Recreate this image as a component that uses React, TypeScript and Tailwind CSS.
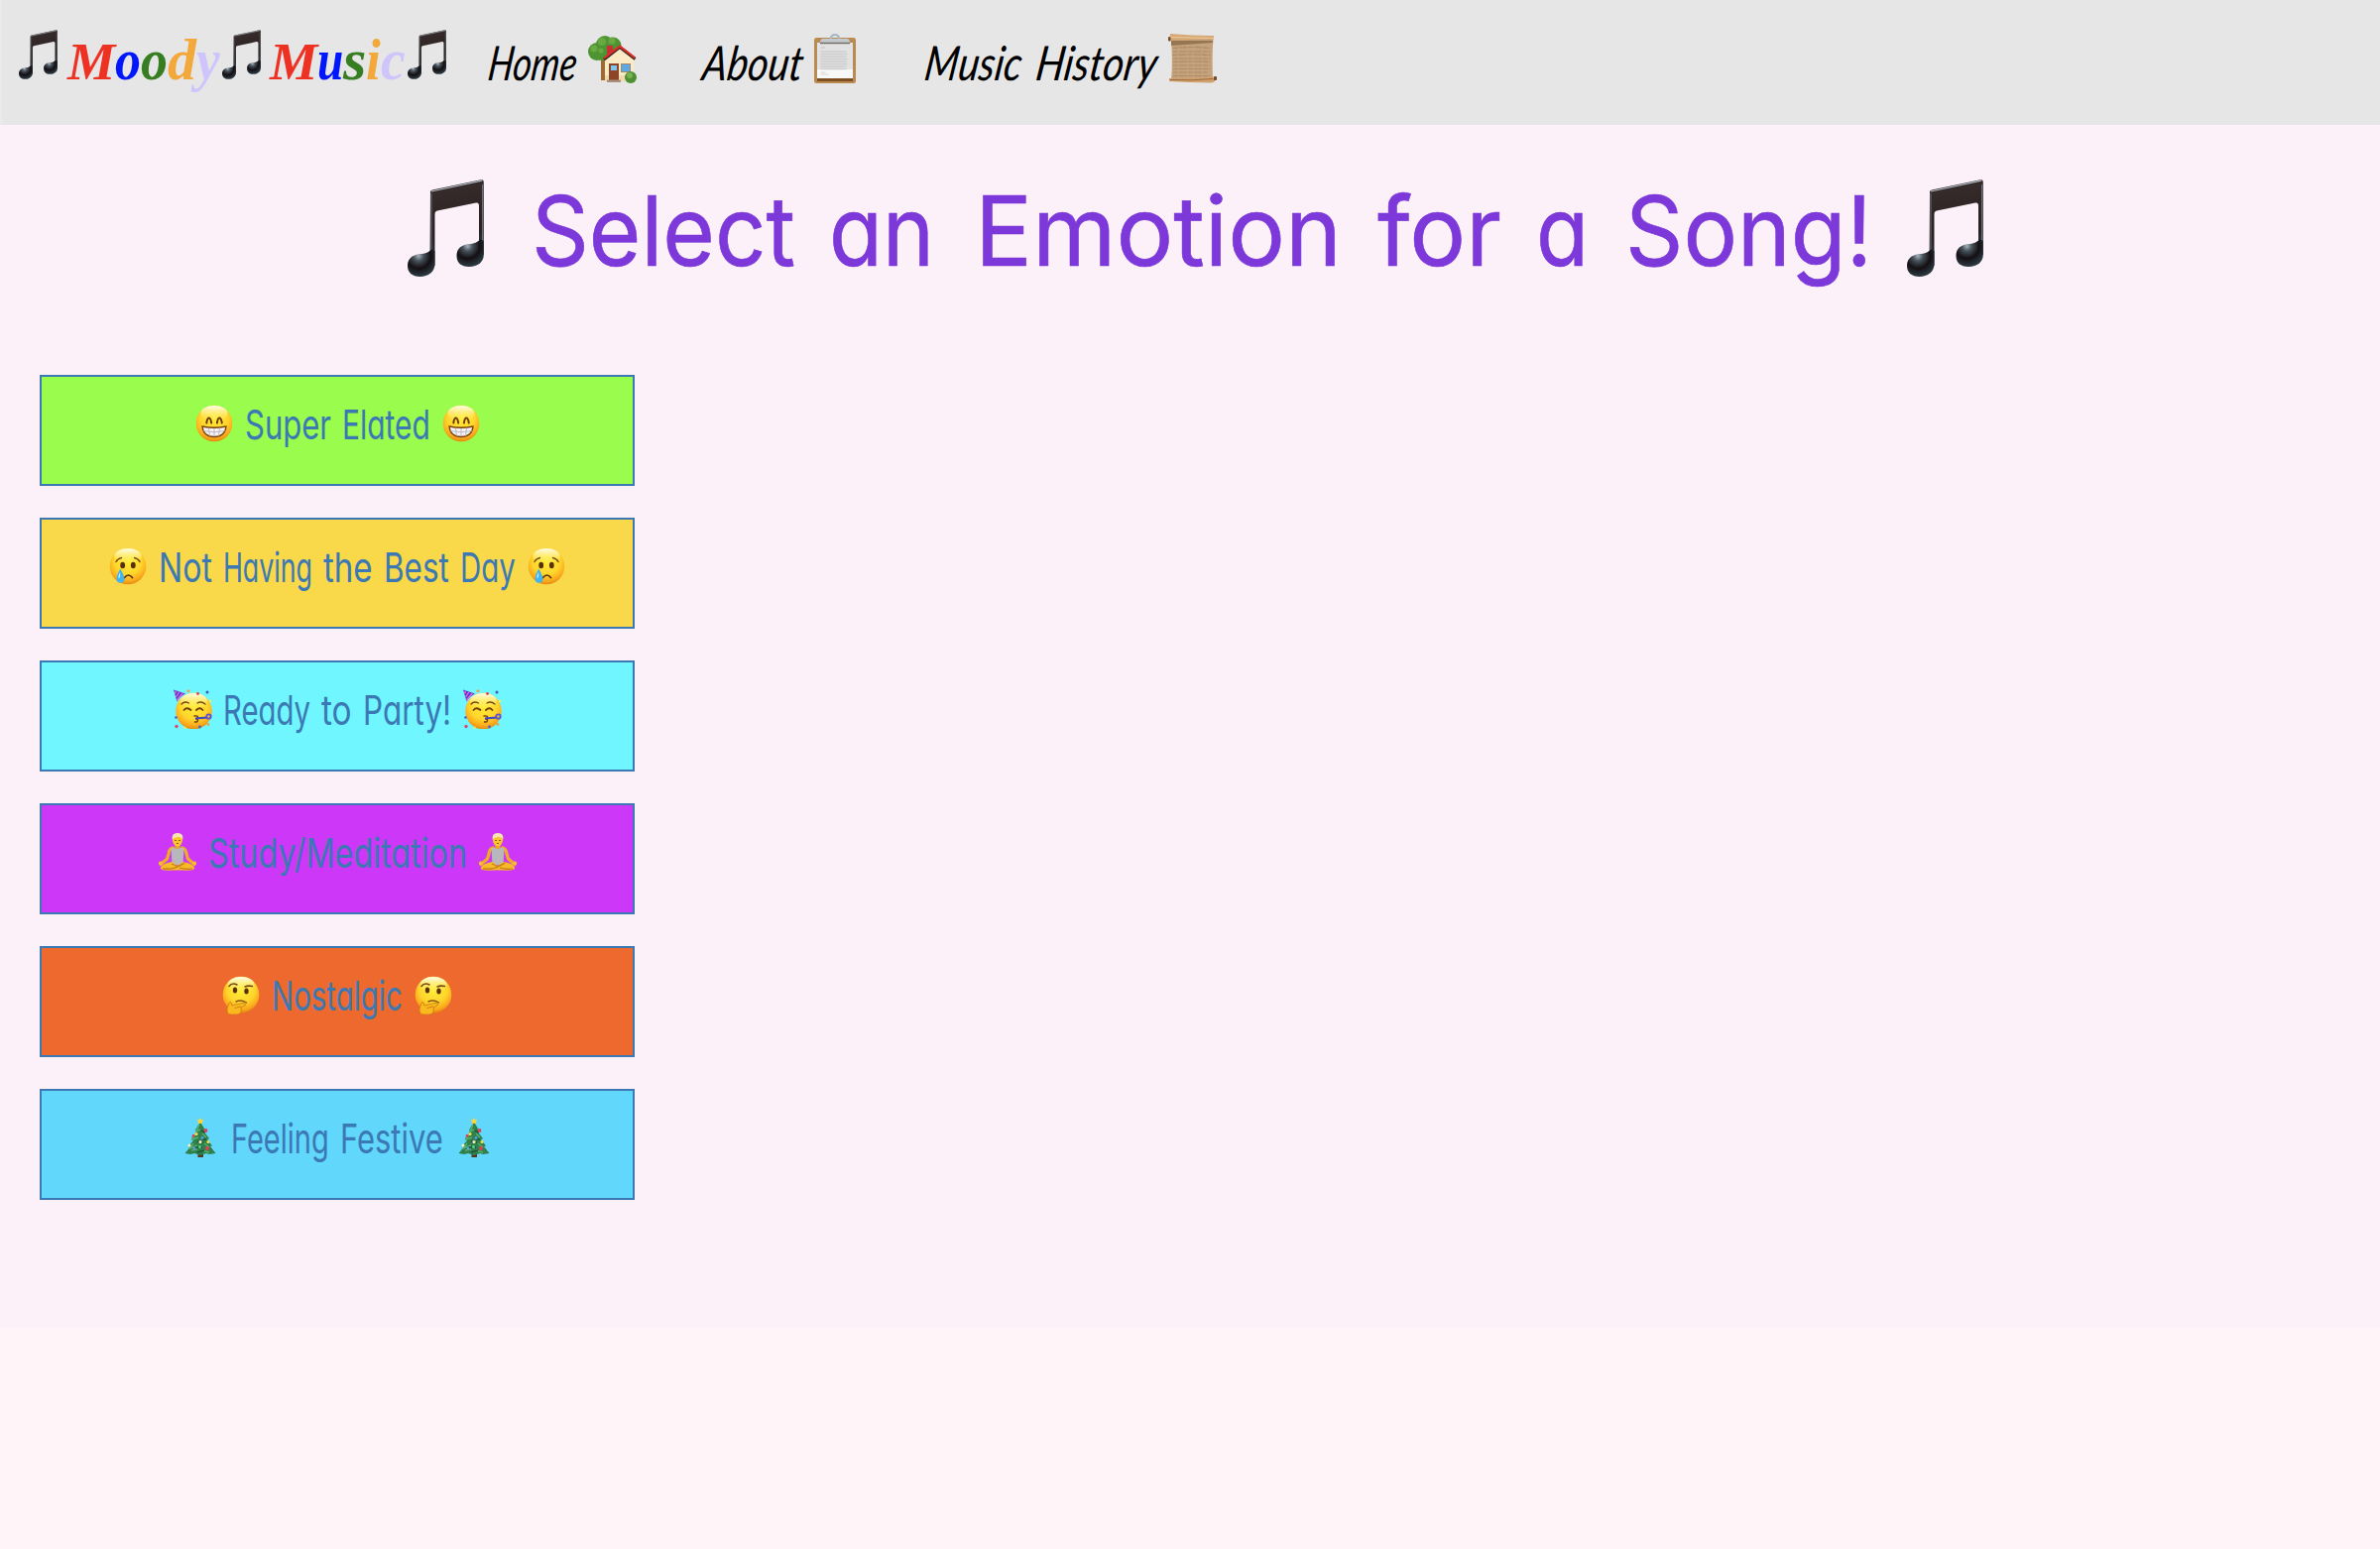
import { useLayoutEffect, useRef, useState } from "react";
import type { ReactNode } from "react";

/** Text stretched horizontally so that it fills a given width. */
function Fit({ text, width, skew = 0, className = "" }: { text: string; width: number; skew?: number; className?: string }) {
  const ref = useRef<HTMLSpanElement>(null);
  const [scale, setScale] = useState(1);
  useLayoutEffect(() => {
    const natural = ref.current?.offsetWidth ?? width;
    setScale(width / natural);
  }, [text, width]);
  return (
    <span className={`inline-block whitespace-nowrap ${className}`} style={{ width }}>
      <span ref={ref} className="inline-block origin-bottom-left" style={{ transform: `scaleX(${scale}) skewX(${-skew}deg)` }}>
        {text}
      </span>
    </span>
  );
}

function Note({ className }: { className: string }) {
  return (
    <svg viewBox="0 0 77 98" className={`shrink-0 ${className}`}>
      <defs>
        <linearGradient id="beam" x1="0" y1="0" x2="0.15" y2="1">
          <stop offset="0" stopColor="#3a2e2e" />
          <stop offset="0.7" stopColor="#2a2020" />
          <stop offset="1" stopColor="#2b4152" />
        </linearGradient>
        <radialGradient id="head" cx="0.4" cy="0.25" r="0.75">
          <stop offset="0" stopColor="#a9b4bb" />
          <stop offset="0.25" stopColor="#46525b" />
          <stop offset="0.6" stopColor="#140f12" />
          <stop offset="1" stopColor="#2d3c45" />
        </radialGradient>
      </defs>
      <path d="M23 12.500Q23 11 25 10.500L74 0.300Q76.800 0 76.800 2.500V76H72V26.500Q72 23 69 23.500L30 31.500Q27.500 32 27.500 35V87H22.500Z" fill="url(#beam)" />
      <path d="M24 12L75 1.200" stroke="#aebcc5" strokeWidth="1.200" fill="none" />
      <path d="M24 14V74M75.500 5V66" stroke="#65747d" strokeWidth="1" fill="none" />
      <path d="M0 87C0 78 7 75.500 14 75C20 74.500 23 72 24.500 70L27.500 72V85C27.500 93 21 98 12.500 98C5 98 0 94 0 87Z" fill="url(#head)" />
      <path d="M49.500 77C49.500 68 56 65.500 63 65C69 64.500 72 62 73.500 60L76.800 62V76C76.800 83 71 88 62 88C54 88 49.500 84 49.500 77Z" fill="url(#head)" />
    </svg>
  );
}

function House({ className }: { className: string }) {
  return (
    <svg viewBox="0 0 49 48" className={className}>
      <path d="M13 22h6l-1 23h-5z" fill="#9b6a35" />
      <g fill="#4f9433">
        <circle cx="9" cy="16" r="9" />
        <circle cx="17" cy="9" r="9" />
        <circle cx="25" cy="10" r="8.500" />
        <circle cx="14" cy="17" r="8" />
      </g>
      <g fill="#75b34a" opacity="0.7">
        <circle cx="14" cy="6" r="4" />
        <circle cx="6" cy="13" r="3.500" />
        <circle cx="24" cy="5" r="3.500" />
        <circle cx="13" cy="15" r="2.500" />
      </g>
      <path d="M19 10h6v10h-6z" fill="#c53232" />
      <path d="M17 24L32 11.500L46 24V46H17Z" fill="#fbeac6" />
      <path d="M17 40h29v6H17z" fill="#f0d9ac" />
      <path d="M16 24L32 11.500L47.500 23.500" fill="none" stroke="#3f2724" strokeWidth="3" />
      <path d="M16 22.800L32 10.600L47.500 22.500" fill="none" stroke="#e02f2b" strokeWidth="2" />
      <path d="M21 28h10v17H21z" fill="#8c4526" />
      <path d="M23 30h6v5h-6z" fill="#7fc5f3" />
      <path d="M33 28h10v9H33z" fill="#a78664" />
      <path d="M34 29h8v7h-8z" fill="#5aa9e8" />
      <path d="M19 44.500h14v2.500H19z" fill="#a98f7d" />
      <circle cx="43" cy="42" r="6" fill="#4f8f33" />
      <circle cx="42" cy="40" r="3" fill="#78b44d" />
    </svg>
  );
}

function Clipboard({ className }: { className: string }) {
  return (
    <svg viewBox="0 0 42 50" className={className}>
      <rect x="0" y="4" width="42" height="46" rx="2.500" fill="#b98b50" />
      <path d="M3 45h36v3H3z" fill="#7d4e20" />
      <path d="M3 9h36v36H3z" fill="#e2e2e2" />
      <path d="M3 36h36v9H3z" fill="#f8f8f8" />
      <path d="M6.500 14h5" stroke="#c4c4c4" />
      <path d="M6.500 18h26M6.500 20.500h27M6.500 23h26M6.500 25.500h27M6.500 28h26M6.500 30.500h27M6.500 33h26M6.500 35.500h26" stroke="#cecece" strokeWidth="1.400" />
      <path d="M6.500 39h5M6.500 41h8" stroke="#d5d5d5" />
      <path d="M16.500 6Q17 1 21 1T25.500 6" fill="none" stroke="#a6b6c3" strokeWidth="2" />
      <path d="M8 5h26q2 1 2 4H6q0-3 2-4z" fill="#c3c8cc" />
      <path d="M6 9.500h30" stroke="#746f66" strokeWidth="1.500" />
    </svg>
  );
}

function Scroll({ className }: { className: string }) {
  return (
    <svg viewBox="0 0 49 50" className={className}>
      <path d="M2.500 4L45.500 5Q44 22 45 46L3 47Q5 25 2.500 4Z" fill="#c4a27c" />
      <path d="M3 7h42v2L3 12z" fill="#8b6a48" opacity="0.8" />
      <path d="M5 14.500q18-2 37 0M5 18h38M4.500 21.500q18-1 38 0M5 25h38M5 28.500q18-1 37 0M5 32h37M5 35.500h37M5 39h36M5 42.500h37" stroke="#a3805c" strokeWidth="1.200" strokeDasharray="5 1 8 1" fill="none" opacity="0.7" />
      <path d="M2 0Q24 2 46 2V5.500Q20 6 2 7Z" fill="#d6a877" />
      <path d="M0.500 3.500L46 4.500" stroke="#f0c999" strokeWidth="1" />
      <rect x="0" y="3" width="2.500" height="4.500" rx="1" fill="#7b4e2b" />
      <path d="M1 45Q24 46 47 43.500V48Q45 49.500 43 49.500Q20 49 1 48Z" fill="#d2a06c" />
      <path d="M2 46.500Q24 47.500 45 45.500" stroke="#9c683a" strokeWidth="1" fill="none" />
      <rect x="46" y="43" width="3" height="4" rx="1" fill="#74492a" />
    </svg>
  );
}

function FaceBase() {
  return (
    <>
      <defs>
        <radialGradient id="face" cx="0.5" cy="0.35" r="0.68">
          <stop offset="0" stopColor="#ffec38" />
          <stop offset="0.55" stopColor="#ffd62c" />
          <stop offset="0.82" stopColor="#fba91c" />
          <stop offset="1" stopColor="#da7f0b" />
        </radialGradient>
        <linearGradient id="shine" x1="0" y1="0" x2="0" y2="1">
          <stop offset="0" stopColor="#fffef0" />
          <stop offset="1" stopColor="#fff36a" stopOpacity="0" />
        </linearGradient>
      </defs>
      <circle cx="20" cy="20" r="18.300" fill="url(#face)" />
      <ellipse cx="20" cy="10" rx="13.500" ry="8" fill="url(#shine)" />
    </>
  );
}

function Grin() {
  return (
    <svg viewBox="0 0 40 40" className="size-10">
      <FaceBase />
      <path d="M12.300 19.500Q13 14.500 14.700 14.500T17.200 19.500M22.900 19.500Q23.600 14.500 25.300 14.500T27.800 19.500" fill="none" stroke="#713d08" strokeWidth="2" strokeLinecap="round" />
      <path d="M8 23Q20 25.500 32 23Q31 33.500 20 33.500T8 23Z" fill="#f4f2f5" stroke="#7a420e" strokeWidth="1.300" />
      <path d="M9 27.500Q20 30 31 27.500M14.500 24.500l1 8M20 25v8M25.500 24.500l-1 8" fill="none" stroke="#b1adb8" strokeWidth="0.800" />
    </svg>
  );
}

function Cry() {
  return (
    <svg viewBox="0 0 40 40" className="size-10">
      <FaceBase />
      <path d="M8 15.500Q9.500 12.500 13.500 11.500M26.500 11.500Q30.500 12.500 32 15.500" fill="none" stroke="#7a480d" strokeWidth="1.400" strokeLinecap="round" />
      <ellipse cx="14.700" cy="19" rx="2.400" ry="3.300" fill="#593107" />
      <ellipse cx="25.300" cy="19" rx="2.400" ry="3.300" fill="#593107" />
      <path d="M16.500 31.500Q20.500 26.500 24.500 31.500" fill="none" stroke="#593107" strokeWidth="1.700" strokeLinecap="round" />
      <path d="M12.300 22.500Q8.500 29 8.500 32.500Q8.500 36.800 12.500 36.800T16.500 32.500Q16 29 12.300 22.500Z" fill="#40b5ee" />
      <path d="M12 26Q10 30 10.500 32.500Q13 31 12 26Z" fill="#c4efff" />
    </svg>
  );
}

function Party() {
  return (
    <svg viewBox="0 0 40 40" className="size-10">
      <g transform="translate(1.500 2)">
        <FaceBase />
      </g>
      <path d="M1 0.500L13 4.500Q7.500 7 4.500 12.500Z" fill="#5a3bd0" />
      <path d="M3.500 1.500L2.500 4.500M7 2.500L3.500 8M10.500 3.600L4.500 11" stroke="#e668d8" strokeWidth="1.300" />
      <path d="M9 15q3-3.500 7.500-1M25 14q4-2.500 8 1" fill="none" stroke="#7a480d" strokeWidth="1.400" strokeLinecap="round" />
      <path d="M11.500 21q3-3.500 7 0M24 21q3.500-3.500 6.500 0" fill="none" stroke="#713d08" strokeWidth="1.800" strokeLinecap="round" />
      <path d="M22 27q4-.5 3.500 1.300T23.500 30q2.500 0 2 1.700T22.500 33" fill="none" stroke="#713d08" strokeWidth="1.400" strokeLinecap="round" />
      <path d="M23 29.500L35 28.500" stroke="#3d45c9" strokeWidth="2.200" />
      <circle cx="36.500" cy="27.500" r="2.200" fill="none" stroke="#5a55d6" strokeWidth="1.800" />
      <circle cx="16" cy="1.800" r="1.500" fill="#f6a04a" />
      <circle cx="25.500" cy="4.500" r="1.400" fill="#e7404e" />
      <circle cx="35" cy="3" r="1.500" fill="#425bc9" />
      <circle cx="38" cy="12" r="1.300" fill="#f4ec5c" />
      <circle cx="3.500" cy="28.500" r="1.300" fill="#3765cf" />
      <circle cx="4" cy="37.500" r="1.700" fill="#e4456b" />
      <circle cx="12.500" cy="38.800" r="1.200" fill="#f8e34e" />
      <circle cx="27.500" cy="38" r="1.400" fill="#4962c9" />
      <circle cx="36" cy="35.500" r="1.400" fill="#eda340" />
    </svg>
  );
}

function Lotus() {
  return (
    <svg viewBox="0 0 40 40" className="size-10">
      <path d="M15 16Q11.500 17 11 22L9.500 27L3 32.500M25 16Q28.500 17 29 22L30.500 27L37 32.500" fill="none" stroke="#eead25" strokeWidth="3.200" strokeLinecap="round" strokeLinejoin="round" />
      <circle cx="2.800" cy="31.500" r="1.900" fill="#f6bf35" />
      <circle cx="37.200" cy="31.500" r="1.900" fill="#f6bf35" />
      <path d="M17.500 12h5v6h-5z" fill="#eda71e" />
      <path d="M13.500 16.500L17 15.500Q20 19 23 15.500L26.500 16.500Q26 24 25.500 33H14.500Q14 24 13.500 16.500Z" fill="#b8b8bc" />
      <path d="M14.500 30Q3 32 2.800 36.500Q4 39.500 15 38.500L25 38.500Q36 39.500 37.200 36.500Q37 32 25.500 30L20 34Z" fill="#f7b928" />
      <path d="M5 37Q15 38 21 34.500T27 32M35 37Q28 38 22 36M14 32Q17 33 19 34.500" fill="none" stroke="#bd7b12" strokeWidth="1.200" />
      <ellipse cx="20" cy="8" rx="5" ry="6.300" fill="#fbc52f" />
      <path d="M14.800 8Q13.500 1 20 1T25.200 8Q24 4.500 20 5T14.800 8Z" fill="#f7e5b2" />
      <path d="M17 8.500h2M21 8.500h2M19 11.500h2" stroke="#8b4b12" strokeWidth="0.900" />
    </svg>
  );
}

function Thinking() {
  return (
    <svg viewBox="0 0 40 40" className="size-10">
      <FaceBase />
      <path d="M8 11.500Q11 7.500 16 10M24 12Q27 10.500 31.500 11.500" fill="none" stroke="#7a480d" strokeWidth="1.600" strokeLinecap="round" />
      <ellipse cx="14" cy="15.500" rx="2.200" ry="3" fill="#593107" />
      <ellipse cx="25.500" cy="16.500" rx="2.200" ry="3" fill="#593107" />
      <path d="M15 27Q20 24.500 25.500 28" fill="none" stroke="#8b5210" strokeWidth="1.400" strokeLinecap="round" />
      <path d="M8.300 28Q10 26 11 31L21 28.500Q26 28.500 24 31L20 33Q21.500 40 15.500 40H10Q5.500 40 6 34Z" fill="#fbb81f" stroke="#c67e0d" strokeWidth="0.800" />
      <path d="M13.500 33.500L20 32" stroke="#c67e0d" strokeWidth="0.900" />
    </svg>
  );
}

function Tree() {
  return (
    <svg viewBox="0 0 40 40" className="size-10">
      <path d="M17.500 34h5.500v6h-5.500z" fill="#5f341e" />
      <path d="M20 4L25 13L23.500 14L29 21L27 22L32 28.500L30 29L35.500 36L29 37L26 36L20 38L14 36L10 37L4.500 36L10 29.500L8 29L13 23L11 21L16.500 14L15 12.500Z" fill="#2f804c" />
      <path d="M19 7L16 14L20 12M15 17L12 22L18 20M13 26L9 31L17 28M22 16l4 4M24 26l5 4M11 33l6-1M22 33l7 2" fill="none" stroke="#57ae68" strokeWidth="1.500" />
      <path d="M21 13l4 2M17 24l6 1M14 30l8 0M26 22l-4 0M17 35l7-2" stroke="#195537" strokeWidth="1.400" />
      <path d="M20 0L21.100 2.300L23.600 2.600L21.800 4.300L22.300 6.800L20 5.500L17.700 6.800L18.200 4.300L16.400 2.600L18.900 2.300Z" fill="#ffd638" />
      <circle cx="25.500" cy="13" r="1.900" fill="#df3f59" />
      <circle cx="13" cy="18.500" r="1.400" fill="#df3f59" />
      <circle cx="27" cy="31" r="2" fill="#df3f59" />
      <circle cx="16" cy="16.500" r="1.600" fill="#f6dd4c" />
      <circle cx="28" cy="24.500" r="1.600" fill="#f6dd4c" />
      <circle cx="22" cy="20.500" r="1.400" fill="#5799eb" />
      <circle cx="14" cy="31" r="1.400" fill="#5799eb" />
      <circle cx="20" cy="24.500" r="1.600" fill="#f4efbb" />
      <circle cx="9" cy="28" r="1.500" fill="#f4efbb" />
      <circle cx="19.500" cy="29.500" r="1.500" fill="#54d489" />
    </svg>
  );
}

type Letter = [string, number, string];

const moody: Letter[] = [
  ["M", 48, "text-[52px] text-[#ed3223]"],
  ["o", 26, "text-[60px] text-[#0017fb]"],
  ["o", 27, "text-[60px] text-[#377e22]"],
  ["d", 29, "text-[60px] text-[#f2a83b]"],
  ["y", 24, "text-[60px] text-[#cfc4fb]"],
];

const music: Letter[] = [
  ["M", 48, "text-[52px] text-[#ed3223]"],
  ["u", 26, "text-[60px] text-[#0017fb]"],
  ["s", 23, "text-[60px] text-[#377e22]"],
  ["i", 15, "text-[60px] text-[#f2a83b]"],
  ["c", 25, "text-[60px] text-[#cfc4fb]"],
];

function LogoWord({ letters }: { letters: Letter[] }) {
  return (
    <span className="mb-[6px] flex items-baseline font-['Liberation_Serif',serif] leading-none font-bold italic">
      {letters.map(([char, width, style], i) => (
        <Fit key={i} text={char} width={width} className={style} />
      ))}
    </span>
  );
}

function NavLink({ words, children }: { words: [string, number][]; children: ReactNode }) {
  return (
    <a className="flex h-full items-center gap-[14px] text-[48px] leading-none text-black italic">
      <span className="flex gap-[14px]">
        {words.map(([text, width]) => (
          <Fit key={text} text={text} width={width} skew={10} />
        ))}
      </span>
      {children}
    </a>
  );
}

const moods: { words: [string, number][]; icon: () => ReactNode; color: string }[] = [
  { words: [["Super", 87], ["Elated", 89]], icon: Grin, color: "bg-[#9afc4d]" },
  { words: [["Not", 54], ["Having", 90], ["the", 50], ["Best", 66], ["Day", 56]], icon: Cry, color: "bg-[#f9d949]" },
  { words: [["Ready", 88], ["to", 31], ["Party!", 89]], icon: Party, color: "bg-[#70f6fe]" },
  { words: [["Study/Meditation", 261]], icon: Lotus, color: "bg-[#cd37f7]" },
  { words: [["Nostalgic", 132]], icon: Thinking, color: "bg-[#ed692d]" },
  { words: [["Feeling", 99], ["Festive", 104]], icon: Tree, color: "bg-[#62d7fc]" },
];

const title: [string, number][] = [
  ["Select", 266],
  ["an", 106],
  ["Emotion", 370],
  ["for", 125],
  ["a", 53],
  ["Song!", 249],
];

const titleGaps = ["ml-[48px]", "ml-[34px]", "ml-[41px]", "ml-[36px]", "ml-[35px]", "ml-[37px]"];

export default function App() {
  return (
    <div className="h-[1562px] w-[2400px] overflow-hidden bg-[#fff4f8]">
      <div className="h-[1339px] bg-[#fdf1f9]">
        <header className="flex h-[126px] items-center border-l-2 border-[#eaeaea] bg-[#e6e6e6] pl-[17px] font-[Lato,sans-serif]">
          <div className="flex items-center">
            <Note className="mb-[16px] h-[50px] w-[39px]" />
            <span className="ml-[10px]">
              <LogoWord letters={moody} />
            </span>
            <Note className="mb-[16px] ml-[2px] h-[50px] w-[39px]" />
            <span className="ml-[9px]">
              <LogoWord letters={music} />
            </span>
            <Note className="mb-[16px] ml-[2px] h-[50px] w-[39px]" />
          </div>
          <nav className="ml-[40px] flex h-full items-center">
            <NavLink words={[["Home", 89]]}>
              <House className="mb-[6px] h-[48px] w-[49px]" />
            </NavLink>
            <div className="ml-[64px]">
              <NavLink words={[["About", 101]]}>
                <Clipboard className="mb-[8px] h-[50px] w-[42px]" />
              </NavLink>
            </div>
            <div className="ml-[67px]">
              <NavLink words={[["Music", 98], ["History", 122]]}>
                <Scroll className="mb-[8px] h-[50px] w-[49px]" />
              </NavLink>
            </div>
          </nav>
        </header>

        <h1 className="flex h-[217px] items-center pl-[411px] font-[Inter,sans-serif] text-[98px] leading-none font-normal text-[#7d38da] [-webkit-text-stroke:0.6px_#7d38da] [font-feature-settings:'cv11']">
          <Note className="mb-[9px] h-[98px] w-[77px]" />
          {title.map(([text, width], i) => (
            <Fit key={text} text={text} width={width} className={`-mt-[3px] ${titleGaps[i]}`} />
          ))}
          <Note className="mb-[9px] ml-[35px] h-[98px] w-[77px]" />
        </h1>

        <main className="mt-[35px] ml-10 flex w-[600px] flex-col gap-8">
          {moods.map(({ words, icon: Icon, color }) => (
            <button key={words[0][0]} className={`h-28 border-2 border-[#3b78b4] ${color}`}>
              <span className="-mt-[12px] flex h-[96px] items-center justify-center gap-[11px] font-[Inter,sans-serif] text-[41px] leading-none text-[#3b78b4] [font-feature-settings:'cv11']">
                <span className="mb-[2px]">
                  <Icon />
                </span>
                {words.map(([text, width]) => (
                  <Fit key={text} text={text} width={width} />
                ))}
                <span className="mb-[2px]">
                  <Icon />
                </span>
              </span>
            </button>
          ))}
        </main>
      </div>
    </div>
  );
}
